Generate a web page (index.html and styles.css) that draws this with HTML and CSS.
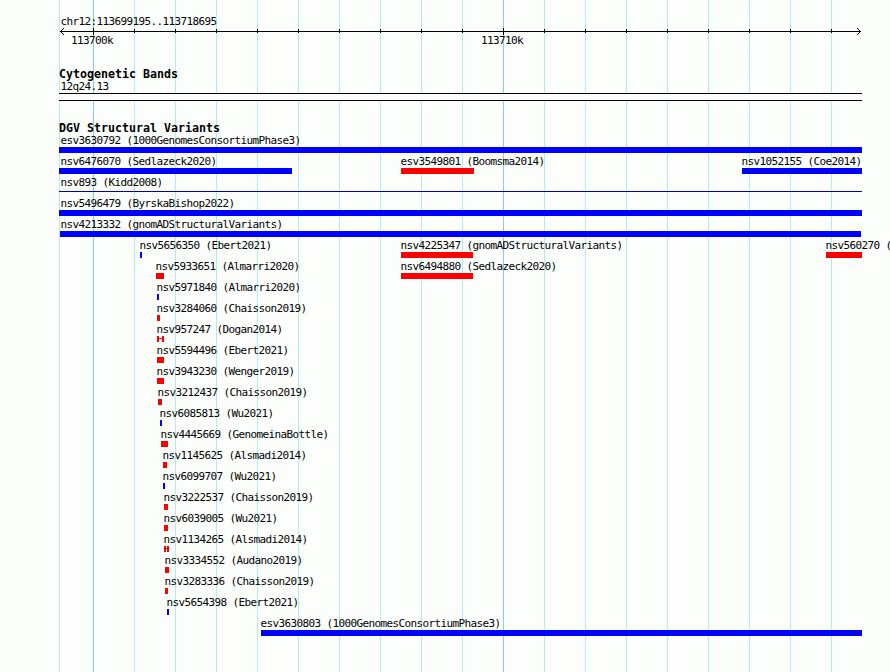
FILE: index.html
```
<!DOCTYPE html>
<html lang="en">
<head>
    <meta charset="UTF-8">
    <meta name="viewport" content="width=device-width, initial-scale=1.0">
    <title>chr12:113699195..113718695</title>
    <link rel="stylesheet" href="styles.css">
</head>
<body>
    <div class="browser">
        <!-- Vertical grid lines behind the tracks -->
        <svg class="gridlines" width="890" height="672" shape-rendering="crispEdges">
            <path class="minor" d="M59.5 0v672M134.5 0v672M175.5 0v672M216.5 0v672M257.5 0v672M298.5 0v672M339.5 0v672M380.5 0v672M421.5 0v672M462.5 0v672M544.5 0v672M585.5 0v672M626.5 0v672M667.5 0v672M708.5 0v672M749.5 0v672M790.5 0v672M831.5 0v672"/>
            <path class="major" d="M93.5 0v672M503.5 0v672"/>
        </svg>

        <!-- Ruler -->
        <div class="ruler">
            <div class="label region">chr12:113699195..113718695</div>
            <svg class="scale" width="890" height="7" shape-rendering="crispEdges">
                <path d="M60 3.5h801M134.5 1v4M175.5 1v4M216.5 1v4M257.5 1v4M298.5 1v4M339.5 1v4M380.5 1v4M421.5 1v4M462.5 1v4M544.5 1v4M585.5 1v4M626.5 1v4M667.5 1v4M708.5 1v4M749.5 1v4M790.5 1v4M831.5 1v4M93.5 0v7M503.5 0v7"/>
                <path d="M61 2.5h1M62 1.5h1M63 .5h1M61 4.5h1M62 5.5h1M63 6.5h1M859 2.5h1M858 1.5h1M857 .5h1M859 4.5h1M858 5.5h1M857 6.5h1"/>
            </svg>
            <div class="ticks">
                <span class="label tick">113700k</span>
                <span class="label tick">113710k</span>
            </div>
        </div>

        <!-- Cytogenetic bands -->
        <div class="track bands">
            <h2 class="track-title">Cytogenetic Bands</h2>
            <div class="label">12q24.13</div>
            <div class="band"></div>
        </div>

        <!-- Structural variants -->
        <div class="track variants">
            <h2 class="track-title">DGV Structural Variants</h2>
            <div class="rows" id="rows"></div>
        </div>
    </div>

    <script>
        // each row holds features: [name, start, width, type]
        const rows = [
            [["esv3630792 (1000GenomesConsortiumPhase3)", 59, 803, "gain"]],
            [["nsv6476070 (Sedlazeck2020)", 59, 233, "gain"], ["esv3549801 (Boomsma2014)", 401, 73, "loss"], ["nsv1052155 (Coe2014)", 742, 120, "gain"]],
            [["nsv893 (Kidd2008)", 59, 803, "thin"]],
            [["nsv5496479 (ByrskaBishop2022)", 59, 803, "gain"]],
            [["nsv4213332 (gnomADStructuralVariants)", 60, 801, "gain"]],
            [["nsv5656350 (Ebert2021)", 140, 2, "gain"], ["nsv4225347 (gnomADStructuralVariants)", 401, 72, "loss"], ["nsv560270 (", 826, 36, "loss"]],
            [["nsv5933651 (Almarri2020)", 156, 8, "loss"], ["nsv6494880 (Sedlazeck2020)", 401, 72, "loss"]],
            [["nsv5971840 (Almarri2020)", 157, 2, "gain"]],
            [["nsv3284060 (Chaisson2019)", 157, 3, "loss"]],
            [["nsv957247 (Dogan2014)", 157, 7, "split"]],
            [["nsv5594496 (Ebert2021)", 157, 7, "loss"]],
            [["nsv3943230 (Wenger2019)", 157, 7, "loss"]],
            [["nsv3212437 (Chaisson2019)", 158, 4, "loss"]],
            [["nsv6085813 (Wu2021)", 160, 2, "gain"]],
            [["nsv4445669 (GenomeinaBottle)", 161, 7, "loss"]],
            [["nsv1145625 (Alsmadi2014)", 163, 4, "loss"]],
            [["nsv6099707 (Wu2021)", 163, 2, "gain"]],
            [["nsv3222537 (Chaisson2019)", 164, 4, "loss"]],
            [["nsv6039005 (Wu2021)", 164, 4, "loss"]],
            [["nsv1134265 (Alsmadi2014)", 164, 5, "split"]],
            [["nsv3334552 (Audano2019)", 165, 4, "loss"]],
            [["nsv3283336 (Chaisson2019)", 165, 3, "loss"]],
            [["nsv5654398 (Ebert2021)", 167, 2, "gain"]],
            [["esv3630803 (1000GenomesConsortiumPhase3)", 261, 601, "gain"]]
        ];

        // labels never start left of the ruler
        function edgeClass(start) {
            if (start === 59) return 'from-edge';
            if (start === 60) return 'near-edge';
            return '';
        }

        document.getElementById('rows').innerHTML = rows.map(row => `
            <div class="row">
                ${row.map(([name, start, width, type]) => `
                    <div class="feature ${edgeClass(start)}" style="grid-column: ${start + 1} / span ${width}">
                        <div class="label">${name}</div>
                        <div class="bar ${type}"></div>
                    </div>
                `).join('')}
            </div>
        `).join('');
    </script>
</body>
</html>
```
FILE: styles.css
```
* {
    margin: 0;
    padding: 0;
    box-sizing: border-box;
}

body {
    background-color: #fcfefc;
    overflow: hidden;
}

.browser {
    position: relative;
    width: 890px;
    height: 672px;
    overflow: hidden;
    color: #000;
    font-family: 'DejaVu Sans Mono', 'Liberation Mono', monospace;
}

.gridlines {
    position: absolute;
    top: 0;
    left: 0;
    z-index: -1;
    fill: none;
}

.minor {
    stroke: #afeeee;
}

.major {
    stroke: #87ceeb;
}

.label {
    height: 13px;
    font-size: 11px;
    line-height: 13px;
    letter-spacing: -0.622px;
    white-space: nowrap;
}

/* Ruler */
.ruler {
    padding-top: 15px;
    height: 68px;
}

.region {
    padding-left: 60.4px;
}

.scale {
    display: block;
    fill: none;
    stroke: #000;
}

.ticks {
    display: flex;
    gap: 368px;
    padding-left: 71px;
    margin-top: -1px;
}

.tick {
    width: 42px;
}

/* Tracks */
.track-title {
    height: 12px;
    padding-left: 59px;
    font-size: 11.63px;
    line-height: 12px;
    white-space: nowrap;
}

.bands {
    height: 54px;
}

.bands .label {
    padding-left: 60.4px;
}

.band {
    width: 803px;
    height: 8px;
    margin-left: 59px;
    background-color: #fff;
    border-top: 1px solid #000;
    border-bottom: 1px solid #000;
}

.row {
    display: grid;
    grid-template-columns: repeat(890, 1px);
    height: 21px;
}

.feature {
    grid-row: 1;
    min-width: 0;
}

.feature .label {
    margin-left: -0.6px;
}

.from-edge .label {
    margin-left: 1.4px;
}

.near-edge .label {
    margin-left: 0.4px;
}

.bar {
    height: 6px;
}

.gain {
    background-color: #00f;
}

.loss {
    background-color: #f00;
}

.thin {
    height: 1px;
    margin-top: 2px;
    background-color: #0000b4;
}

/* two blocks joined by a thin connector */
.split {
    border: solid #f00;
    border-width: 0 2px;
    background: linear-gradient(#f00, #f00) 0 2px / 100% 1px no-repeat;
}
```
